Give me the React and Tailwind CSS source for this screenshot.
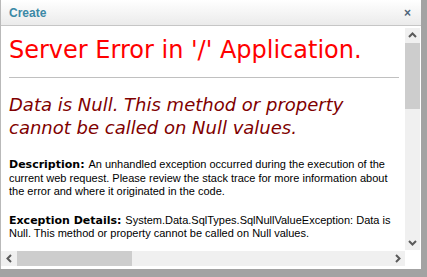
import React from "react";

const Chevron = ({ dir }) => {
  const paths = {
    up: "M1 6 L4.5 2.5 L8 6",
    down: "M1 3 L4.5 6.5 L8 3",
    left: "M6 1 L2.5 4.5 L6 8",
    right: "M3 1 L6.5 4.5 L3 8",
  };
  return (
    <svg width="9" height="9" viewBox="0 0 9 9">
      <path d={paths[dir]} fill="none" stroke="#5a5a5a" strokeWidth="2" />
    </svg>
  );
};

const App = () => {
  return (
    <div className="w-[427px] h-[277px] bg-[#a3a3a3] overflow-hidden">
      <div className="w-[421px] h-[269px] bg-white border-l border-[#b9b9b9] flex flex-col">
        <div className="h-[26px] shrink-0 flex items-center justify-between pl-[8px] pr-[10px] bg-gradient-to-b from-white to-[#ebebeb] border-b border-[#c6c6c6]">
          <span className="font-['Liberation_Sans',Arial,sans-serif] font-bold text-[12px] text-[#3c89a6]">Create</span>
          <span className="font-['Liberation_Sans',Arial,sans-serif] font-bold text-[12px] text-[#4f6479] leading-none">×</span>
        </div>
        <div className="pt-[2px] flex flex-col">
          <div className="flex h-[222px]">
            <div className="w-[404px] overflow-hidden pl-[8px] pr-[6px]">
              <div className="w-[390px]">
                <h1 className="font-['DejaVu_Sans',Verdana,sans-serif] text-[24px] text-[#ff0000] leading-[28px] mt-[8px] whitespace-nowrap">Server Error in '/' Application.</h1>
                <hr className="border-0 border-t border-[#c0c0c0] mt-[13px]" />
                <h2 className="font-['DejaVu_Sans',Verdana,sans-serif] italic text-[18px] text-[#800000] leading-[22.5px] mt-[16px]">Data is Null. This method or property cannot be called on Null values.</h2>
                <p className="font-['Liberation_Sans',Arial,sans-serif] text-[11px] leading-[13.5px] text-black mt-[19px]">
                  <b className="font-['DejaVu_Sans',Verdana,sans-serif] text-[11px]">Description: </b>
                  An unhandled exception occurred during the execution of the current web request. Please review the stack trace for more information about the error and where it originated in the code.
                </p>
                <p className="font-['Liberation_Sans',Arial,sans-serif] text-[11px] leading-[13.5px] text-black mt-[15px]">
                  <b className="font-['DejaVu_Sans',Verdana,sans-serif] text-[11px]">Exception Details: </b>
                  System.Data.SqlTypes.SqlNullValueException: Data is Null. This method or property cannot be called on Null values.
                </p>
              </div>
            </div>
            <div className="w-[15px] bg-[#f0f0f0] flex flex-col">
              <div className="h-[15px] flex items-center justify-center">
                <Chevron dir="up" />
              </div>
              <div className="h-[66px] bg-[#cdcdcd]" />
              <div className="flex-1" />
              <div className="h-[15px] flex items-center justify-center">
                <Chevron dir="down" />
              </div>
            </div>
          </div>
          <div className="flex h-[15px] mt-[1px]">
            <div className="w-[404px] bg-[#f0f0f0] flex">
              <div className="w-[16px] flex items-center justify-center">
                <Chevron dir="left" />
              </div>
              <div className="w-[115px] bg-[#cdcdcd]" />
              <div className="flex-1" />
              <div className="w-[15px] flex items-center justify-center">
                <Chevron dir="right" />
              </div>
            </div>
            <div className="w-[15px] bg-white" />
          </div>
        </div>
      </div>
    </div>
  );
};

export default App;
